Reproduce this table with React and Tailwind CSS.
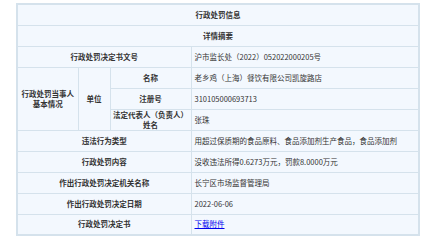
export default function App() {
  const td = "border border-[#d5e2ec] bg-[#f3f8fe] h-[21px] p-0 align-middle";
  const lab = `${td} text-center font-bold text-[#333]`;
  const val = `${td} text-left pl-[3px] text-[#333]`;
  return (
    <div className="w-[438px] h-[240px] bg-white pt-[3px] pl-[16px]" style={{ fontFamily: '"Noto Sans CJK SC", sans-serif' }}>
      <table className="border-collapse border-2 border-[#d5e2ec] text-[7.5px] leading-[10px] table-fixed w-[402px]">
        <colgroup>
          <col className="w-[61px]" />
          <col className="w-[32px]" />
          <col className="w-[81px]" />
          <col className="w-[228px]" />
        </colgroup>
        <tbody>
          <tr><td colSpan={4} className={lab}>行政处罚信息</td></tr>
          <tr><td colSpan={4} className={lab}>详情摘要</td></tr>
          <tr><td colSpan={3} className={lab}>行政处罚决定书文号</td><td className={val}>沪市监长处（2022）052022000205号</td></tr>
          <tr>
            <td rowSpan={3} className={lab}>行政处罚当事人<br />基本情况</td>
            <td rowSpan={3} className={lab}>单位</td>
            <td className={lab}>名称</td>
            <td className={val}>老乡鸡（上海）餐饮有限公司凯旋路店</td>
          </tr>
          <tr><td className={lab}>注册号</td><td className={val}>310105000693713</td></tr>
          <tr><td className={lab}>法定代表人（负责人）<br />姓名</td><td className={val}>张珠</td></tr>
          <tr><td colSpan={3} className={lab}>违法行为类型</td><td className={val}>用超过保质期的食品原料、食品添加剂生产食品，食品添加剂</td></tr>
          <tr><td colSpan={3} className={lab}>行政处罚内容</td><td className={val}>没收违法所得0.6273万元，罚款8.0000万元</td></tr>
          <tr><td colSpan={3} className={lab}>作出行政处罚决定机关名称</td><td className={val}>长宁区市场监督管理局</td></tr>
          <tr><td colSpan={3} className={lab}>作出行政处罚决定日期</td><td className={val}>2022-06-06</td></tr>
          <tr><td colSpan={3} className={lab}>行政处罚决定书</td><td className={val}><span className="text-[#0000ee] underline">下载附件</span></td></tr>
        </tbody>
      </table>
    </div>
  );
}
